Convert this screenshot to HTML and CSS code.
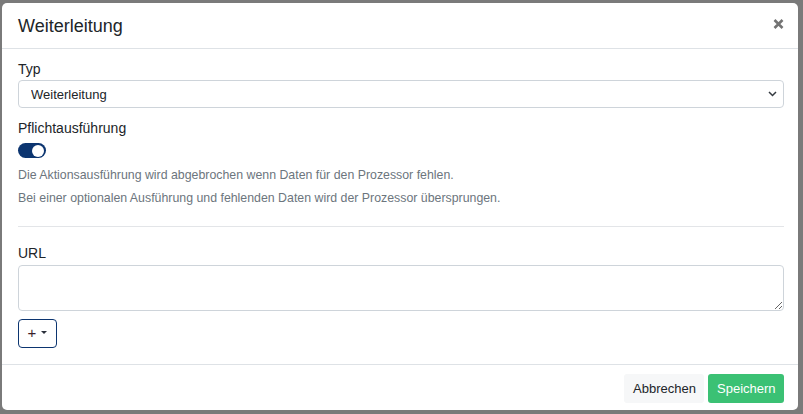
FILE: index.html
```html
<!DOCTYPE html>
<html lang="de">
<head>
<meta charset="utf-8">
<title>Weiterleitung</title>
<link rel="stylesheet" href="styles.css">
</head>
<body>
<div class="modal">
  <div class="modal-header">
    <h5 class="modal-title">Weiterleitung</h5>
    <button class="close" type="button" aria-label="Schließen">
      <svg width="11" height="10" viewBox="0 0 11 10"><path d="M1.5 1 L9.5 9 M9.5 1 L1.5 9" stroke="#737373" stroke-width="2.6" stroke-linecap="butt"/></svg>
    </button>
  </div>
  <div class="modal-body">
    <label class="lbl">Typ</label>
    <div class="select-wrap">
      <select class="select"><option>Weiterleitung</option></select>
      <svg class="chev" width="9" height="6" viewBox="0 0 9 6"><path d="M1 1 L4.5 4.5 L8 1" fill="none" stroke="#343a40" stroke-width="1.5"/></svg>
    </div>
    <div class="group">
      <label class="lbl">Pflichtausführung</label>
      <div class="toggle"><span class="knob"></span></div>
      <p class="help first">Die Aktionsausführung wird abgebrochen wenn Daten für den Prozessor fehlen.</p>
      <p class="help">Bei einer optionalen Ausführung und fehlenden Daten wird der Prozessor übersprungen.</p>
    </div>
    <hr class="sep">
    <label class="lbl">URL</label>
    <textarea class="area"></textarea>
    <button class="add" type="button"><span class="plus">+</span><span class="caret"></span></button>
  </div>
  <div class="modal-footer">
    <button class="btn btn-light" type="button">Abbrechen</button>
    <button class="btn btn-green" type="button">Speichern</button>
  </div>
</div>
</body>
</html>
```
FILE: styles.css
```css
html, body {
  margin: 0;
  height: 100%;
}
body {
  background: #7a7a7a;
  font-family: "Liberation Sans", Arial, sans-serif;
  color: #212529;
  padding: 3px 5px 0 2px;
  box-sizing: border-box;
  overflow: hidden;
}
.modal {
  width: 796px;
  height: 407px;
  background: #fff;
  border-radius: 5px;
  display: flex;
  flex-direction: column;
  box-sizing: border-box;
  overflow: hidden;
}
.modal-header {
  height: 46px;
  box-sizing: border-box;
  border-bottom: 1px solid #dee2e6;
  display: flex;
  align-items: center;
  justify-content: space-between;
  padding: 0 14px 0 16px;
}
.modal-title {
  margin: 0;
  font-size: 18px;
  font-weight: normal;
  line-height: 1.2;
  color: #212529;
  position: relative;
  top: 1px;
}
.close {
  border: 0;
  background: none;
  padding: 0;
  width: 11px;
  height: 10px;
  display: flex;
  margin-top: -4px;
}
.modal-body {
  flex: 1;
  padding: 10px 14px 16px 16px;
  display: flex;
  flex-direction: column;
  align-items: stretch;
}
.lbl {
  display: block;
  font-size: 14px;
  line-height: 21px;
  color: #212529;
}
.select-wrap {
  position: relative;
  height: 28px;
}
.select {
  appearance: none;
  -webkit-appearance: none;
  width: 100%;
  height: 28px;
  border: 1px solid #ced4da;
  border-radius: 4px;
  background: #fff;
  font-family: "Liberation Sans", Arial, sans-serif;
  font-size: 13px;
  color: #212529;
  padding: 0 30px 0 12px;
  box-sizing: border-box;
  margin: 0;
}
.chev {
  position: absolute;
  right: 7px;
  top: 11px;
  pointer-events: none;
}
.group {
  margin-top: 10px;
}
.toggle {
  width: 28px;
  height: 15px;
  margin-top: 4px;
  border-radius: 8px;
  background: #0c3570;
  position: relative;
}
.knob {
  position: absolute;
  right: 2px;
  top: 1.5px;
  width: 12px;
  height: 12px;
  border-radius: 50%;
  background: #fff;
}
.help {
  margin: 0 0 5px;
  font-size: 12.35px;
  line-height: 18px;
  color: #6c757d;
}
.help.first {
  margin-top: 8px;
}
.sep {
  border: 0;
  border-top: 1px solid #e3e5e8;
  margin: 14px 0 16px;
  height: 0;
}
.area {
  margin-top: 1px;
  height: 46px;
  box-sizing: border-box;
  border: 1px solid #ced4da;
  border-radius: 4px;
  resize: vertical;
  font-family: "Liberation Sans", Arial, sans-serif;
  font-size: 13px;
  padding: 6px 12px;
  display: block;
}
.add {
  margin-top: 8px;
  width: 39px;
  height: 29px;
  border: 1px solid #0c3570;
  border-radius: 4px;
  background: #fff;
  padding: 0;
  display: flex;
  align-items: center;
  justify-content: center;
  gap: 5px;
  align-self: flex-start;
  font-family: "Liberation Sans", Arial, sans-serif;
}
.plus {
  font-size: 15px;
  line-height: 1;
  color: #3a1f2a;
  position: relative;
  top: -1px;
}
.caret {
  width: 0;
  height: 0;
  border-left: 3px solid transparent;
  border-right: 3px solid transparent;
  border-top: 3px solid #2a2f3a;
  margin-top: -2px;
}
.modal-footer {
  height: 46px;
  box-sizing: border-box;
  border-top: 1px solid #dee2e6;
  display: flex;
  justify-content: flex-end;
  align-items: center;
  gap: 4px;
  padding: 0 14px 0 16px;
}
.btn {
  height: 29px;
  border: 0;
  border-radius: 3px;
  font-family: "Liberation Sans", Arial, sans-serif;
  font-size: 13px;
  padding: 0 9px;
  margin-bottom: -1px;
}
.btn-light {
  background: #f6f7f8;
  color: #212529;
  width: 80px;
}
.btn-green {
  background: #3bc174;
  color: #fff;
  width: 76px;
}
```
